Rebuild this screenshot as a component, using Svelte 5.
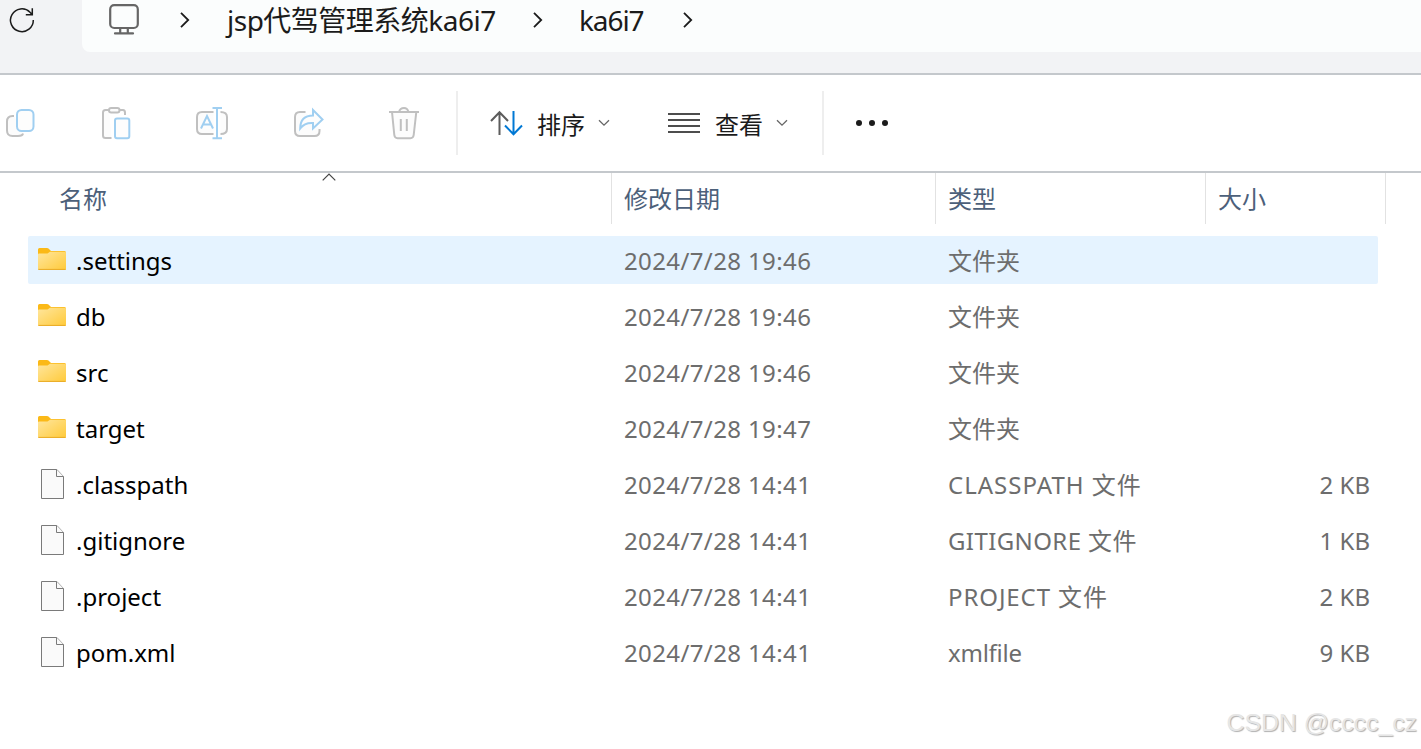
<script lang="ts">
	interface Entry {
		name: string;
		kind: 'folder' | 'file';
		modified: string;
		type: string;
		tracking?: number;
		size?: string;
	}

	const crumbs = ['jsp代驾管理系统ka6i7', 'ka6i7'];

	const entries: Entry[] = [
		{ name: '.settings', kind: 'folder', modified: '2024/7/28 19:46', type: '文件夹' },
		{ name: 'db', kind: 'folder', modified: '2024/7/28 19:46', type: '文件夹' },
		{ name: 'src', kind: 'folder', modified: '2024/7/28 19:46', type: '文件夹' },
		{ name: 'target', kind: 'folder', modified: '2024/7/28 19:47', type: '文件夹' },
		{ name: '.classpath', kind: 'file', modified: '2024/7/28 14:41', type: 'CLASSPATH 文件', tracking: 1, size: '2 KB' },
		{ name: '.gitignore', kind: 'file', modified: '2024/7/28 14:41', type: 'GITIGNORE 文件', tracking: 0.4, size: '1 KB' },
		{ name: '.project', kind: 'file', modified: '2024/7/28 14:41', type: 'PROJECT 文件', tracking: 0.9, size: '2 KB' },
		{ name: 'pom.xml', kind: 'file', modified: '2024/7/28 14:41', type: 'xmlfile', tracking: -0.25, size: '9 KB' }
	];

	let selected = $state('.settings');
</script>

{#snippet chevron()}
	<svg class="chevron" width="10" height="16" viewBox="0 0 10 16">
		<path d="M1 .8 8.2 8 1 15.2" />
	</svg>
{/snippet}

{#snippet caret()}
	<svg class="caret" width="12" height="8" viewBox="0 0 12 8">
		<path d="M1 1.2 6 6.2 11 1.2" />
	</svg>
{/snippet}

<div class="explorer">
	<header class="address-row">
		<svg class="refresh" width="28" height="28" viewBox="0 0 28 28">
			<path d="M25.3 14A11.4 11.4 0 1 1 22 6.2L24.3 8.8M24.3 2.2V8.8H17.8" />
		</svg>
		<nav class="address">
			<svg class="monitor" width="30" height="31" viewBox="0 0 30 31">
				<rect x="1.2" y="1.2" width="27.6" height="22.8" rx="4" />
				<path d="M11.2 24V28.6M18.8 24V28.6M6 29.4H24" />
			</svg>
			{@render chevron()}
			<span class="crumb first">{crumbs[0]}</span>
			{@render chevron()}
			<span class="crumb second">{crumbs[1]}</span>
			{@render chevron()}
		</nav>
	</header>

	<div class="toolbar">
		<div class="tools">
			<svg width="34" height="34" viewBox="0 0 34 34">
				<path class="grey" d="M11 9H9.500Q4 9 4 14.500V23.500Q4 29 9.500 29H15Q19.500 29 20 26.500" />
				<rect class="blue" x="14" y="3" width="16.500" height="21" rx="4.500" />
			</svg>
			<svg width="34" height="34" viewBox="0 0 34 34">
				<path class="grey" d="M10 3H6.500Q4 3 4 5.500V28.500Q4 31 6.500 31H12.500M20.500 3H24Q26 3 26 5.500V8" />
				<rect class="grey" x="10" y="1" width="10.500" height="4.500" rx="2.200" />
				<rect class="blue" x="16" y="11.500" width="14.300" height="19.800" rx="2" />
			</svg>
			<svg width="34" height="34" viewBox="0 0 34 34">
				<path class="grey" d="M18.500 5H7Q2 5 2 10V22Q2 27 7 27H18.500M25.500 5Q32 5 32 10V22Q32 27 25.500 27" />
				<path class="blue" d="M6 21.500 12 9 18 21.500M8 17.500H16M17.500 1H27M17.500 31.200H27M22 1V31" />
			</svg>
			<svg width="34" height="34" viewBox="0 0 34 34">
				<path class="grey" d="M14.500 5H9Q4 5 4 10V24Q4 29 9 29H23.500Q28.500 29 28.500 24V22" />
				<path class="blue" d="M22 3 31.500 12.500 22 21.500V16Q13.500 15.500 9.200 21.500C9.200 13 13.500 8.500 22 8.500Z" />
			</svg>
			<svg width="34" height="34" viewBox="0 0 34 34">
				<path class="grey" d="M2 5H32M5 5 7.300 28Q7.700 31.200 10.500 31.200H23.500Q26.300 31.200 26.700 28L29.300 5M12 5Q13 1 17 1 20.500 1 21.500 5M13.800 12V24M19.800 12V24" />
			</svg>
		</div>
		<div class="menus">
			<button class="menu sort">
				<svg width="33" height="26" viewBox="0 0 33 26">
					<path class="up" d="M9.500 25V2M1 11 9.500 2.200 18 11" />
					<path class="down" d="M23.500 1V24M15 15.500 23.500 24.200 32 15.500" />
				</svg>
				<span>排序</span>
				{@render caret()}
			</button>
			<button class="menu view">
				<svg width="32" height="22" viewBox="0 0 32 22">
					<path class="lines" d="M0 2H32M0 8H32M0 14H32M0 20H32" />
				</svg>
				<span>查看</span>
				{@render caret()}
			</button>
		</div>
		<button class="more" aria-label="更多">
			<i></i><i></i><i></i>
		</button>
	</div>

	<div class="columns head">
		<div class="cell name">
			名称
			<svg class="sort-mark" width="14" height="8" viewBox="0 0 14 8">
				<path d="M.7 7.300 7 1 13.300 7.300" />
			</svg>
		</div>
		<div class="cell">修改日期</div>
		<div class="cell">类型</div>
		<div class="cell">大小</div>
	</div>

	<div class="list">
		{#each entries as entry (entry.name)}
			<!-- svelte-ignore a11y_click_events_have_key_events, a11y_no_static_element_interactions -->
			<div
				class="columns row"
				class:selected={entry.name === selected}
				onclick={() => (selected = entry.name)}
			>
				<div class="name">
					{#if entry.kind === 'folder'}
						<svg class="icon" width="28" height="30" viewBox="0 0 28 30">
							<defs>
								<linearGradient id="folder" x1="0" y1="0" x2="1" y2="1">
									<stop offset="0" stop-color="#ffe69d" />
									<stop offset="1" stop-color="#ffca3a" />
								</linearGradient>
							</defs>
							<path d="M0 10V4.500Q0 3 1.500 3H9Q10.500 3 12 5L13 6H26.500Q28 6 28 7.500V10Z" fill="#fbb917" />
							<path d="M0 9.500Q0 8.500 1 8.500H9.500L12 6.800H27Q28 6.800 28 8V23.500Q28 25 26.500 25H1.500Q0 25 0 23.500Z" fill="url(#folder)" />
							<path d="M.3 24.400H27.700" stroke="#e9ab25" />
						</svg>
					{:else}
						<svg class="icon" width="28" height="30" viewBox="0 0 28 30">
							<path class="page" d="M3.500.5H18.800L25.500 7.500V29.500H3.500Z" />
							<path class="page" d="M18.500.5V7.500H25.500" />
						</svg>
					{/if}
					<span>{entry.name}</span>
				</div>
				<div class="date">{entry.modified}</div>
				<div class="type" style="letter-spacing: {entry.tracking ?? 0}px">{entry.type}</div>
				<div class="size">{entry.size ?? ''}</div>
			</div>
		{/each}
	</div>

	<div class="watermark">CSDN @cccc_cz</div>
</div>

<style>
	:global(body) {
		background: #fff;
		overflow: hidden;
	}

	.explorer {
		position: relative;
		width: 1421px;
		height: 749px;
		overflow: hidden;
		background: #fff;
		font-family: 'Noto Sans', 'Noto Sans CJK SC', sans-serif;
		font-size: 24px;
		color: #000;
	}

	svg {
		display: block;
		flex: none;
		fill: none;
	}

	button {
		border: 0;
		padding: 0;
		background: none;
		font: inherit;
		color: inherit;
	}

	.address-row {
		display: flex;
		box-sizing: border-box;
		height: 75px;
		background: #f2f3f5;
		border-bottom: 2px solid #c4c8cc;
	}

	.refresh {
		margin: 6px 46px 0 8px;
		stroke: #1b1b1b;
		stroke-width: 1.5;
	}

	.address {
		display: flex;
		flex: 1;
		align-items: center;
		box-sizing: border-box;
		height: 52px;
		padding: 0 0 12px 27px;
		background: #fbfdfd;
		border-radius: 0 0 0 8px;
	}

	.monitor {
		margin: -1px 41px 0 0;
		stroke: #666;
		stroke-width: 2.2;
		stroke-linecap: round;
	}

	.chevron {
		stroke: #1b1b1b;
		stroke-width: 1.8;
	}

	.crumb {
		font-size: 28px;
		line-height: 40px;
		color: #1b1b1b;
		white-space: nowrap;
	}

	.crumb.first {
		width: 270px;
		margin: 0 36px 0 37px;
		letter-spacing: -0.5px;
	}

	.crumb.second {
		width: 66px;
		margin: 0 38px 0 36px;
		letter-spacing: -1.1px;
	}

	.toolbar {
		display: flex;
		align-items: center;
		box-sizing: border-box;
		height: 98px;
		border-bottom: 2px solid #c4c8cc;
	}

	.tools {
		display: flex;
		gap: 62px;
		box-sizing: border-box;
		width: 456px;
		padding: 2px 0 0 3px;
		stroke-width: 2;
	}

	.grey {
		stroke: #c0c0c0;
		fill: #fcfcfc;
	}

	.blue {
		stroke: #a0cff1;
		fill: #fdfdfd;
	}

	.menus {
		display: flex;
		align-items: center;
		box-sizing: border-box;
		width: 368px;
		height: 64px;
		padding-left: 32px;
		border: solid #eee;
		border-width: 0 2px;
	}

	.menu {
		display: flex;
		align-items: center;
		color: #1b1b1b;
	}

	.menu span {
		line-height: 36px;
		margin-top: 3px;
	}

	.sort span {
		margin-left: 14px;
	}

	.view {
		margin-left: 58px;
	}

	.view span {
		margin-left: 15px;
	}

	.menu .caret {
		margin-left: 13px;
	}

	.up {
		stroke: #5c5c5c;
		stroke-width: 2;
	}

	.down {
		stroke: #0078d4;
		stroke-width: 2;
	}

	.lines {
		stroke: #4d4d4d;
		stroke-width: 2;
	}

	.caret {
		stroke: #666;
		stroke-width: 1.3;
	}

	.more {
		display: flex;
		gap: 7px;
		margin-left: 32px;
	}

	.more i {
		width: 6px;
		height: 6px;
		border-radius: 50%;
		background: #1b1b1b;
	}

	.columns {
		display: grid;
		grid-template-columns: 584px 324px 270px 180px;
	}

	.head {
		margin-left: 28px;
		height: 51px;
		color: #4c607a;
		line-height: 52px;
	}

	.cell {
		position: relative;
		box-sizing: border-box;
		height: 51px;
		padding-left: 12px;
		border-right: 1px solid #e2e2e2;
	}

	.cell.name {
		padding-left: 31px;
	}

	.sort-mark {
		position: absolute;
		left: 294px;
		top: 0;
		stroke: #444;
		stroke-width: 1.2;
	}

	.list {
		display: flex;
		flex-direction: column;
		gap: 8px;
		padding: 12px 0 0 28px;
	}

	.row {
		grid-template-columns: 584px 324px 270px 172px;
		width: 1350px;
		height: 48px;
		line-height: 50px;
		color: #6d6d6d;
		border-radius: 2px;
		white-space: nowrap;
	}

	.row.selected {
		background: #e5f3ff;
	}

	.row .name {
		display: flex;
		color: #000;
	}

	.icon {
		margin: 9px 10px 0;
	}

	.page {
		fill: #fafafa;
		stroke: #7a7a7a;
	}

	.date,
	.type {
		padding-left: 12px;
	}

	.date {
		letter-spacing: 0.38px;
	}

	.size {
		padding-right: 8px;
		text-align: right;
	}

	.watermark {
		position: absolute;
		right: 4px;
		bottom: 9px;
		font-family: 'Liberation Sans', sans-serif;
		font-size: 24.8px;
		line-height: 34px;
		color: #e6e6e6;
		text-shadow: 1px 1px 1px #b0b0b0;
	}
</style>
